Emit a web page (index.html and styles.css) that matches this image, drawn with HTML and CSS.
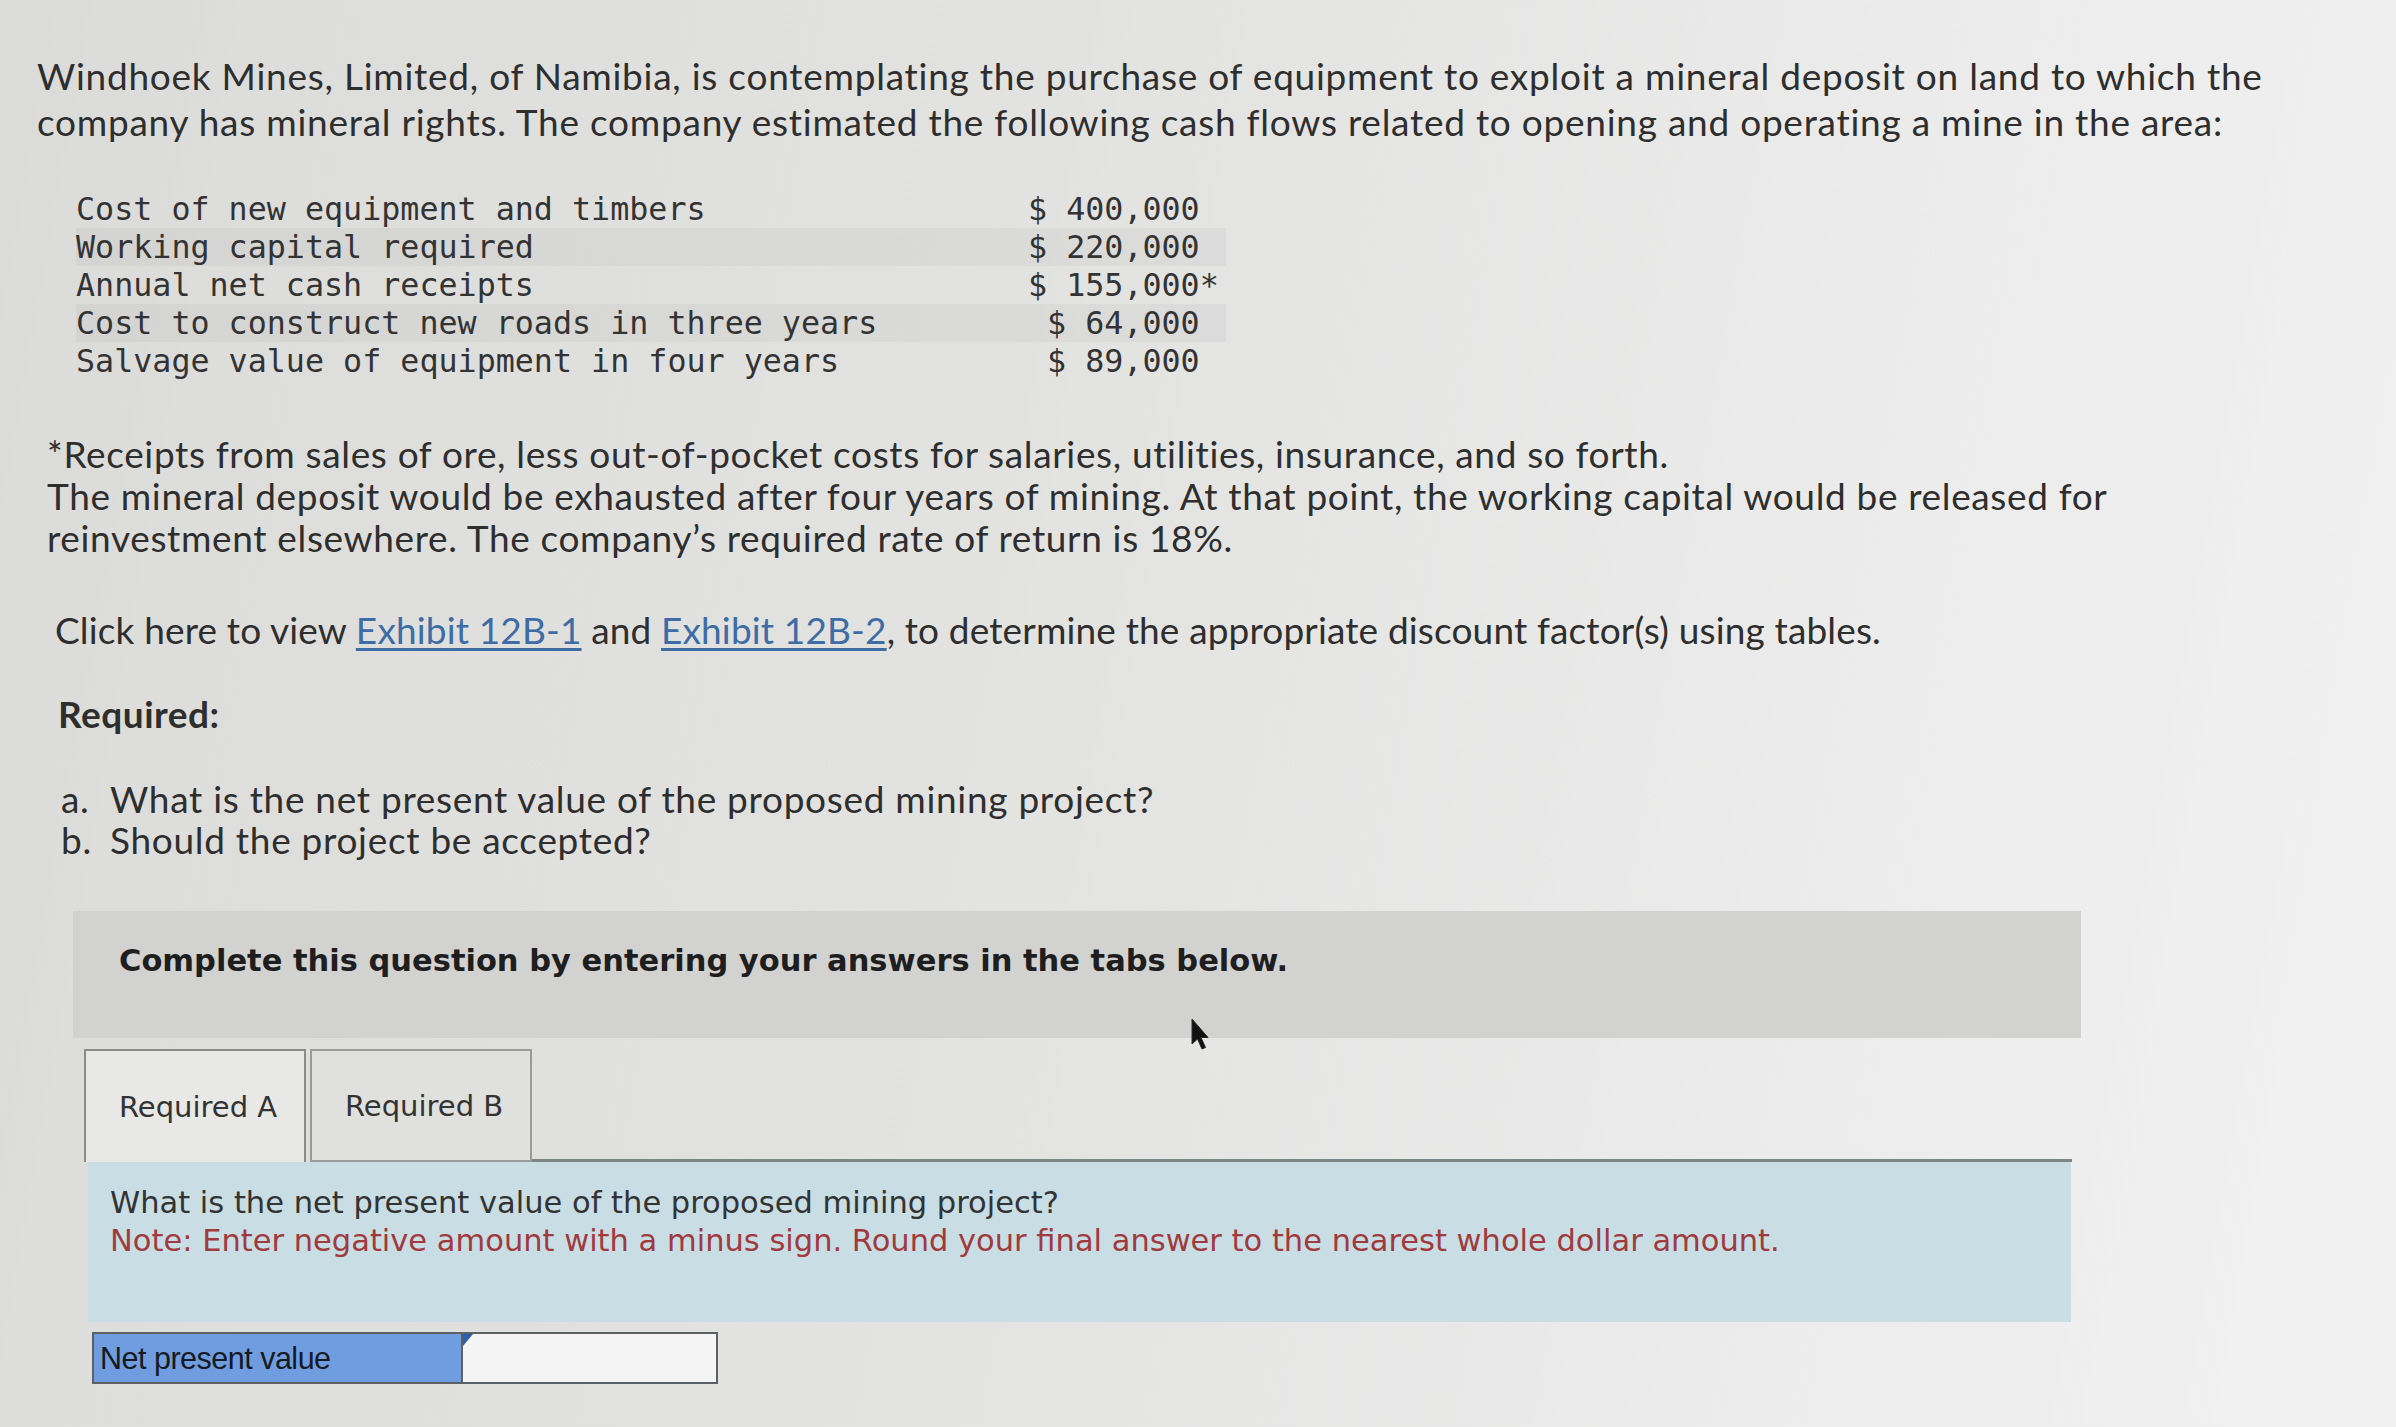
FILE: index.html
```html
<!DOCTYPE html>
<html lang="en">
<head>
<meta charset="utf-8">
<title>Windhoek Mines</title>
<link rel="stylesheet" href="styles.css">
</head>
<body>
<main class="page">
  <p class="intro">Windhoek Mines, Limited, of Namibia, is contemplating the purchase of equipment to exploit a mineral deposit on land to which the<br>company has mineral rights. The company estimated the following cash flows related to opening and operating a mine in the area:</p>

  <div class="flows">
    <div class="row"><span class="lbl">Cost of new equipment and timbers</span><span class="val">$ 400,000</span><span class="star"></span></div>
    <div class="row alt"><span class="lbl">Working capital required</span><span class="val">$ 220,000</span><span class="star"></span></div>
    <div class="row"><span class="lbl">Annual net cash receipts</span><span class="val">$ 155,000</span><span class="star">*</span></div>
    <div class="row alt"><span class="lbl">Cost to construct new roads in three years</span><span class="val">$ 64,000</span><span class="star"></span></div>
    <div class="row"><span class="lbl">Salvage value of equipment in four years</span><span class="val">$ 89,000</span><span class="star"></span></div>
  </div>

  <p class="note">*Receipts from sales of ore, less out-of-pocket costs for salaries, utilities, insurance, and so forth.<br>The mineral deposit would be exhausted after four years of mining. At that point, the working capital would be released for<br>reinvestment elsewhere. The company’s required rate of return is 18%.</p>

  <p class="click">Click here to view <a class="link" href="#">Exhibit 12B-1</a> and <a class="link" href="#">Exhibit 12B-2</a>, to determine the appropriate discount factor(s) using tables.</p>

  <p class="required">Required:</p>

  <ol class="qlist">
    <li><span class="mark">a.</span><span>What is the net present value of the proposed mining project?</span></li>
    <li><span class="mark">b.</span><span>Should the project be accepted?</span></li>
  </ol>

  <div class="instruct">Complete this question by entering your answers in the tabs below.
    <svg class="cursor" width="20" height="34" viewBox="0 0 20 34"><path d="M2 1 L2 26 L7.5 21 L12 31 L15.5 29.5 L11 19.5 L18 19.5 Z" fill="#111" stroke="#2a2a2a" stroke-width="1"/></svg>
  </div>

  <div class="tabs">
    <div class="tab active">Required A</div>
    <div class="tab">Required B</div>
    <div class="tabline"></div>
  </div>

  <div class="panel">
    <div class="question">What is the net present value of the proposed mining project?</div>
    <div class="hint">Note: Enter negative amount with a minus sign. Round your final answer to the nearest whole dollar amount.</div>
  </div>

  <div class="answer">
    <div class="answer-label">Net present value</div>
    <div class="answer-input"><span class="tri"></span></div>
  </div>
</main>
</body>
</html>
```
FILE: styles.css
```css
html, body {
  margin: 0;
  padding: 0;
}
body {
  width: 2396px;
  height: 1427px;
  overflow: hidden;
  background: linear-gradient(100deg, #dbdbda 0%, #e3e3e2 45%, #ededed 80%, #f1f1f1 100%);
  color: #2e2e2e;
  font-family: Lato, "Open Sans", sans-serif;
}
.page {
  position: relative;
  padding: 53px 0 0 37px;
}
p { margin: 0; }

.intro {
  font-size: 37px;
  letter-spacing: 0.75px;
  line-height: 46px;
  white-space: nowrap;
}

.flows {
  margin: 45px 0 0 39px;
  font-family: "DejaVu Sans Mono", "Liberation Mono", monospace;
  font-size: 31.7px;
  color: #333;
  display: flex;
  flex-direction: column;
  width: 1150px;
}
.row {
  display: grid;
  grid-template-columns: 952px 9ch 1ch;
  height: 38px;
  align-items: center;
}
.row.alt { background: rgba(0, 0, 0, 0.035); }
.val { text-align: right; white-space: pre; }
.lbl { white-space: pre; }

.note {
  margin: 53px 0 0 10px;
  font-size: 37px;
  letter-spacing: 0.65px;
  line-height: 42px;
  white-space: nowrap;
}

.click {
  margin: 50px 0 0 18px;
  font-size: 37px;
  letter-spacing: 0.15px;
  line-height: 42px;
  white-space: nowrap;
}
.link {
  color: #3e6ca4;
  text-decoration: underline;
  text-underline-offset: 4px;
}

.required {
  margin: 42px 0 0 21px;
  font-size: 37px;
  letter-spacing: 0.5px;
  line-height: 42px;
  font-weight: 700;
}

.qlist {
  list-style: none;
  margin: 43px 0 0 24px;
  padding: 0;
  font-size: 37px;
  letter-spacing: 0.7px;
  line-height: 41px;
}
.qlist li { display: flex; }
.mark { width: 49px; }

.instruct {
  position: relative;
  margin: 51px 0 0 36px;
  width: 2008px;
  height: 127px;
  box-sizing: border-box;
  padding: 30px 0 0 46px;
  background: #d2d2d1;
  font-family: "DejaVu Sans", Verdana, sans-serif;
  font-weight: 700;
  font-size: 30.5px;
  line-height: 40px;
  color: #1e1e1e;
}
.cursor {
  position: absolute;
  left: 1117px;
  top: 107px;
}

.tabs {
  display: flex;
  align-items: flex-end;
  margin: 11px 0 0 47px;
  width: 1988px;
  height: 113px;
}
.tab {
  width: 222px;
  height: 113px;
  box-sizing: border-box;
  display: flex;
  align-items: center;
  padding-left: 33px;
  font-family: "DejaVu Sans", Verdana, sans-serif;
  font-size: 29px;
  color: #333;
  background: #e0e0df;
  border: 2px solid #9a9a9a;
  margin-right: 4px;
}
.tab.active {
  background: #e8e8e7;
  border-color: #8a8a8a;
  border-bottom: none;
}
.tabline {
  flex: 1;
  border-bottom: 3px solid #7d8587;
  margin-left: -4px;
}

.panel {
  margin: 0 0 0 51px;
  width: 1983px;
  height: 160px;
  box-sizing: border-box;
  padding: 22px 0 0 22px;
  background: #c9dde4;
  font-family: "DejaVu Sans", Verdana, sans-serif;
  font-size: 30.5px;
  line-height: 38px;
  color: #333;
}
.hint { color: #a03a3d; }

.answer {
  display: flex;
  margin: 10px 0 0 55px;
  width: 626px;
  height: 52px;
  box-sizing: border-box;
  border: 2px solid #5b6065;
}
.answer-label {
  width: 361px;
  background: #6f9de0;
  display: flex;
  align-items: center;
  padding-left: 6px;
  font-family: "Liberation Sans", Arial, sans-serif;
  font-size: 30.5px;
  letter-spacing: -0.5px;
  color: #161a22;
}
.answer-input {
  position: relative;
  flex: 1;
  background: #f4f4f4;
  border-left: 2px solid #5b6065;
}
.tri {
  position: absolute;
  left: 0;
  top: 0;
  width: 0;
  height: 0;
  border-top: 12px solid #2f5fa8;
  border-right: 10px solid transparent;
}
```
